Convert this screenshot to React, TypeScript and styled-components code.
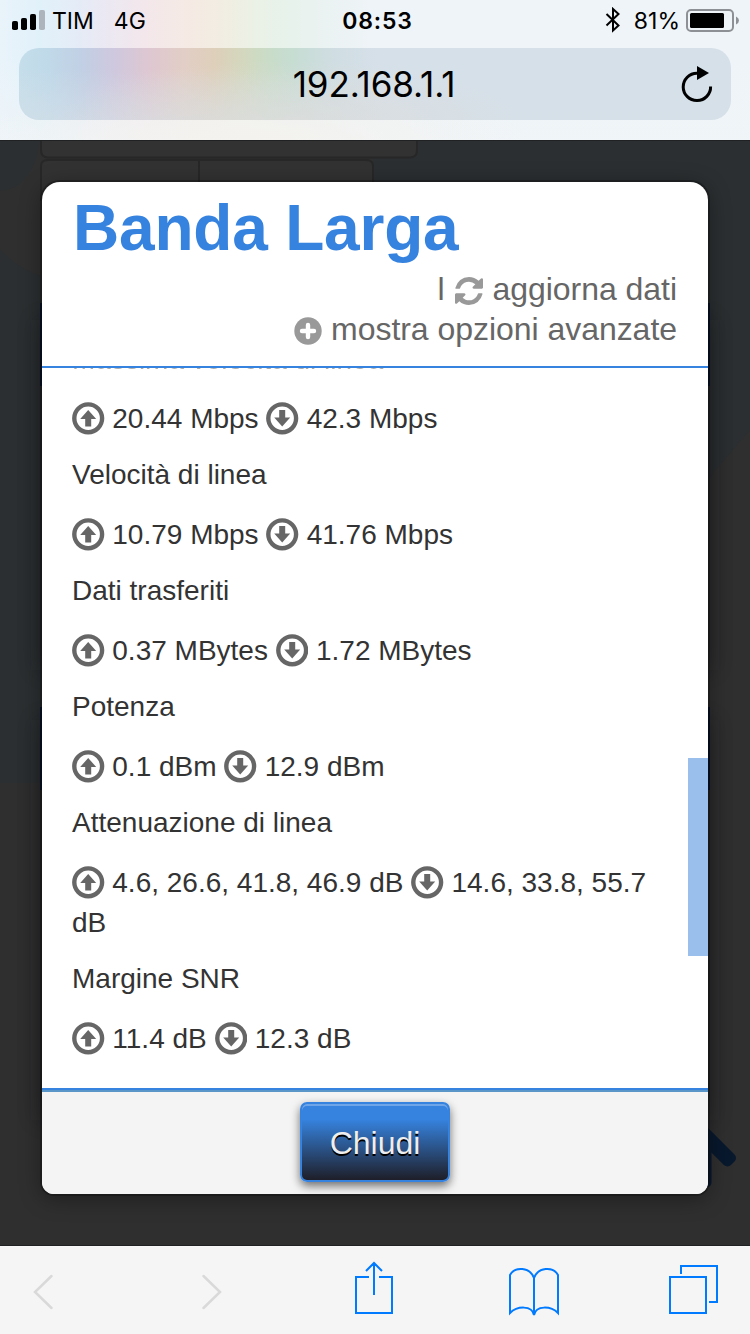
import React from 'react';
import styled, { createGlobalStyle } from 'styled-components';

const Global = createGlobalStyle`
  * { box-sizing: border-box; }
  body { margin: 0; background: #2f2f2f; }
  p, h1, h2 { margin: 0; }
`;

const Screen = styled.div`
  width: 750px;
  height: 1334px;
  display: flex;
  flex-direction: column;
  overflow: hidden;
  font-family: 'Liberation Sans', Arial, sans-serif;
`;

/* ---------- browser chrome, top ---------- */

const TopChrome = styled.header`
  height: 140px;
  flex: none;
  padding: 0 19px;
  display: flex;
  flex-direction: column;
  font-family: Inter, sans-serif;
  color: #000;
  background:
    radial-gradient(ellipse 280px 60px at 250px 140px, #f4f2ee 0, rgba(244, 242, 238, 0) 100%),
    linear-gradient(to bottom, rgba(240, 245, 248, 0) 40%, rgba(240, 245, 248, 0.75) 100%),
    linear-gradient(to right, #e9f3fa 0, #e1f1fa 40px, #e4ecf7 75px, #ece8f2 110px, #f3e7eb 145px, #f5eae4 185px, #f2ede2 220px, #ebf1e6 255px, #e7f2eb 285px, #ebf2f2 325px, #eef4f7 370px, #eff4f8 420px, #eff4f8 750px);
`;

const StatusBar = styled.div`
  height: 48px;
  flex: none;
  padding-bottom: 8px;
  margin: 0 -9px 0 -7px;
  display: grid;
  grid-template-columns: 1fr auto 1fr;
  align-items: center;
  font-size: 23px;
  line-height: 28px;
`;

const StatusGroup = styled.div<{ $end?: boolean }>`
  display: flex;
  align-items: center;
  justify-content: ${(p) => (p.$end ? 'flex-end' : 'flex-start')};
`;

const StatusText = styled.span<{ $left: number; $right?: number }>`
  margin: 1px ${(p) => p.$right ?? 0}px 0 ${(p) => p.$left}px;
`;

const Clock = styled.span`
  margin: 1px 0 0 3px;
  font-weight: 600;
  letter-spacing: 0.8px;
`;

const AddressBar = styled.div`
  position: relative;
  height: 72px;
  width: 712px;
  flex: none;
  border-radius: 20px;
  display: flex;
  align-items: center;
  justify-content: center;
  font-size: 35px;
  background:
    radial-gradient(ellipse 230px 60px at 270px 72px, rgba(222, 220, 217, 0.7) 0, rgba(222, 220, 217, 0) 100%),
    linear-gradient(to bottom, rgba(214, 224, 231, 0) 30%, rgba(214, 224, 231, 0.6) 100%),
    linear-gradient(to right, #c5deea 0, #c0d9e9 30px, #c2cfe4 65px, #cfc8de 95px, #dec7d1 130px, #e2cec6 165px, #decfba 195px, #d3d8be 225px, #c9dcc8 250px, #c6ddd3 275px, #cfdde1 310px, #d6e0e9 360px, #d6e0e9 712px);
`;

const Address = styled.span`
  margin-right: 2px;
  letter-spacing: -0.1px;
`;

const ReloadSlot = styled.span`
  position: absolute;
  right: 17px;
  top: 16px;
  display: flex;
`;

/* ---------- dimmed router page ---------- */

const Page = styled.main`
  position: relative;
  flex: 1;
  overflow: hidden;
  background: #2f2f2f;
  padding: 42px 42px 52px;
  display: flex;
`;

const Wallpaper = styled.svg`
  position: absolute;
  inset: 0;
`;

const Modal = styled.section`
  position: relative;
  flex: 1;
  display: flex;
  flex-direction: column;
  border-radius: 18px 18px 12px 12px;
  background: #fff;
  box-shadow: 0 0 0 2px rgba(12, 12, 12, 0.35), 0 4px 22px rgba(0, 0, 0, 0.4);
  overflow: hidden;
`;

const ModalHead = styled.div`
  height: 186px;
  flex: none;
  padding: 12px 31px 0 30px;
  border-bottom: 2px solid #3683df;
`;

const Title = styled.h1`
  padding-left: 1px;
  font-size: 64px;
  line-height: 68px;
  height: 75px;
  font-weight: bold;
  letter-spacing: -0.2px;
  color: #3683df;
`;

const HeadLink = styled.div`
  display: flex;
  justify-content: flex-end;
  align-items: center;
  height: 40px;
  font-size: 32px;
  line-height: 40px;
  color: #666;

  svg { margin: 3px 9px 0 0; }
`;

const Separator = styled.span`
  margin-right: 11px;
`;

const LinkText = styled.span`
  letter-spacing: -0.04px;
`;

const ScrollArea = styled.div`
  position: relative;
  flex: 1;
  overflow: hidden;
  padding: 0 40px 0 30px;
  font-size: 28px;
  line-height: 40px;
  color: #333;
`;

const Stats = styled.div`
  margin-top: -28px;
`;

const Label = styled.h2`
  font-size: inherit;
  font-weight: normal;
  margin-bottom: 20px;

  &:first-child {
    margin-bottom: 19px;
    opacity: 0.4;
  }
`;

const Value = styled.p`
  margin-bottom: 16px;

  svg { vertical-align: -7px; }
`;

const ScrollThumb = styled.div`
  position: absolute;
  right: 0;
  top: 390px;
  width: 20px;
  height: 198px;
  background: #9bbfec;
`;

const ModalFoot = styled.div`
  height: 106px;
  flex: none;
  padding-top: 10px;
  border-top: 2px solid #3683df;
  box-shadow: inset 0 2px 0 #5b96c8;
  background: #f4f4f4;
  display: flex;
  justify-content: center;
  align-items: flex-start;
`;

const CloseButton = styled.button`
  width: 150px;
  height: 80px;
  margin-top: 2px;
  padding: 2px 0 0;
  border: 2px solid #3683df;
  border-radius: 7px;
  font: 32px/74px 'Liberation Sans', Arial, sans-serif;
  color: #eee;
  text-shadow: 0 2px 0 #000;
  background: linear-gradient(to bottom, #3683df 0, #3683df 20%, #1e1e28 100%);
  box-shadow: inset 0 2px 0 rgba(255, 255, 255, 0.28), 0 4px 10px rgba(0, 0, 0, 0.55);
`;

/* ---------- browser chrome, bottom ---------- */

const BottomBar = styled.nav`
  height: 88px;
  flex: none;
  padding: 12px 31px 0 33px;
  border-top: 1px solid #f8f8f8;
  background: #f5f5f5;
  display: flex;
`;

const NavItem = styled.span<{ $before: number }>`
  display: flex;
  margin-left: ${(p) => p.$before}px;
`;

const ArrowIcon = ({ down }: { down?: boolean }) => (
  <svg width="32.5" height="33" viewBox="0 0 32.5 33">
    <circle cx="16.2" cy="16.3" r="13.900" fill="none" stroke="#666" strokeWidth="4.400" />
    <path
      d="M16.200 8 24.200 17H19.200V24.500H13.200V17H8.200z"
      fill="#666"
      transform={down ? 'rotate(180 16.2 16.3)' : undefined}
    />
  </svg>
);

interface Stat {
  label: string;
  up: string;
  down: string;
}

const stats: Stat[] = [
  { label: 'Massima velocità di linea', up: '20.44 Mbps', down: '42.3 Mbps' },
  { label: 'Velocità di linea', up: '10.79 Mbps', down: '41.76 Mbps' },
  { label: 'Dati trasferiti', up: '0.37 MBytes', down: '1.72 MBytes' },
  { label: 'Potenza', up: '0.1 dBm', down: '12.9 dBm' },
  { label: 'Attenuazione di linea', up: '4.6, 26.6, 41.8, 46.9 dB', down: '14.6, 33.8, 55.7 dB' },
  { label: 'Margine SNR', up: '11.4 dB', down: '12.3 dB' },
];

const Backdrop = () => (
  <Wallpaper width="750" height="1106" viewBox="0 0 750 1106">
    <defs>
      <filter id="soft" x="-20%" y="-20%" width="140%" height="140%">
        <feGaussianBlur stdDeviation="10" />
      </filter>
    </defs>
    <rect width="750" height="1106" fill="#2f2f2f" />
    <path d="M0 0H40Q34 48 0 51z" fill="#2b2f31" />
    <path d="M0 109Q20 130 42 136V643H0z" fill="#2b2f31" />
    <path d="M373 0H750V290L708 339H373z" fill="#2b2f31" />
    <rect x="38" y="180" width="674" height="350" fill="#14181a" opacity="0.35" filter="url(#soft)" />
    <rect x="38" y="580" width="674" height="400" fill="#14181a" opacity="0.35" filter="url(#soft)" />
    <path d="M41-10V10Q41 17.500 48 17.500H410Q417 17.500 417 10V-10z" fill="#323232" stroke="#272727" strokeWidth="2" />
    <path d="M41 60V26Q41 20 48 20H366Q373 20 373 26V60z" fill="#323232" stroke="#272727" strokeWidth="2" />
    <path d="M199 20V60" stroke="#272727" strokeWidth="2" />
    <path d="M40 163h670v83H40zM40 567h670v83H40z" fill="#031230" />
    <rect x="0" y="-7.500" width="60" height="15" rx="5" fill="#08182d" transform="translate(732.75 1023.25) rotate(225)" />
    <path d="M700 1000h11.500v42q0 5-5 5h-6.500z" fill="#08182d" />
    <path d="M0 .5H750M0 1105.500H750" stroke="#202122" />
  </Wallpaper>
);

export default function App() {
  return (
    <Screen>
      <Global />
      <TopChrome>
        <StatusBar>
          <StatusGroup>
            <svg width="34" height="22" viewBox="0 0 34 22">
              <rect x="0" y="12" width="6" height="9" rx="1.800" />
              <rect x="9" y="9" width="6" height="12" rx="1.800" />
              <rect x="18" y="5" width="6" height="16" rx="1.800" />
              <rect x="27" y="1" width="6" height="20" rx="1.800" fill="#adb4bc" />
            </svg>
            <StatusText $left={6}>TIM</StatusText>
            <StatusText $left={20}>4G</StatusText>
          </StatusGroup>
          <Clock>08:53</Clock>
          <StatusGroup $end>
            <svg width="16" height="26" viewBox="0 0 16 26" fill="none" stroke="#000" strokeWidth="2">
              <path d="M1.500 7 13.500 18.500 8 23.500V2l5.500 5L1.500 18.500" />
            </svg>
            <StatusText $left={13} $right={6}>81%</StatusText>
            <svg width="54" height="24" viewBox="0 0 54 24">
              <rect x="1" y="2" width="46" height="21" rx="4" fill="none" stroke="#8d9195" strokeWidth="2" />
              <rect x="4" y="5" width="34" height="15" rx="1.500" />
              <path d="M50 8.500q3 1.500 3 4t-3 4z" fill="#8d9195" />
            </svg>
          </StatusGroup>
        </StatusBar>
        <AddressBar>
          <Address>192.168.1.1</Address>
          <ReloadSlot>
            <svg width="34" height="40" viewBox="0 0 34 40">
              <path d="M30.600 22.500A13.700 13.700 0 1 1 17 9.200" fill="none" stroke="#000" strokeWidth="3" />
              <path d="M17 2 29 9 17 16z" />
            </svg>
          </ReloadSlot>
        </AddressBar>
      </TopChrome>

      <Page>
        <Backdrop />
        <Modal>
          <ModalHead>
            <Title>Banda Larga</Title>
            <HeadLink>
              <Separator>l</Separator>
              <svg width="28" height="28" viewBox="0 0 1536 1536" fill="#999">
                <path d="M1511 928q0 5-1 7-64 268-268 434.500T764 1536q-146 0-282.500-55T238 1324l-129 129q-19 19-45 19t-45-19-19-45V960q0-26 19-45t45-19h448q26 0 45 19t19 45-19 45l-137 137q71 66 161 102t187 36q134 0 250-65t186-179q11-17 53-117 8-23 30-23h192q13 0 22.500 9.500t9.500 22.500zm25-800v448q0 26-19 45t-45 19h-448q-26 0-45-19t-19-45 19-45l138-138Q969 256 768 256q-134 0-250 65T332 500q-11 17-53 117-8 23-30 23H50q-13 0-22.500-9.500T18 608v-7q65-268 270-434.500T768 0q146 0 284 55.500T1297 212l130-129q19-19 45-19t45 19 19 45z" />
              </svg>
              <LinkText>aggiorna dati</LinkText>
            </HeadLink>
            <HeadLink>
              <svg width="28" height="28" viewBox="0 0 28 28">
                <circle cx="14" cy="14" r="13.700" fill="#999" />
                <path d="M14 8v12M8 14h12" stroke="#fff" strokeWidth="4.400" strokeLinecap="round" />
              </svg>
              <LinkText>mostra opzioni avanzate</LinkText>
            </HeadLink>
          </ModalHead>
          <ScrollArea>
            <Stats>
              {stats.map((s) => (
                <React.Fragment key={s.label}>
                  <Label>{s.label}</Label>
                  <Value>
                    <ArrowIcon /> {s.up} <ArrowIcon down /> {s.down}
                  </Value>
                </React.Fragment>
              ))}
            </Stats>
            <ScrollThumb />
          </ScrollArea>
          <ModalFoot>
            <CloseButton>Chiudi</CloseButton>
          </ModalFoot>
        </Modal>
      </Page>

      <BottomBar>
        <NavItem $before={0}>
          <svg width="20" height="68" viewBox="0 0 20 68" fill="none" stroke="#d9d9d9" strokeWidth="2.500" strokeLinecap="round">
            <path d="M18.500 17 2 33 18.500 49" />
          </svg>
        </NavItem>
        <NavItem $before={149}>
          <svg width="20" height="68" viewBox="0 0 20 68" fill="none" stroke="#d9d9d9" strokeWidth="2.500" strokeLinecap="round">
            <path d="M1.500 17 18 33 1.500 49" />
          </svg>
        </NavItem>
        <NavItem $before={133}>
          <svg width="38" height="68" viewBox="0 0 38 68" fill="none" stroke="#007aff" strokeWidth="2">
            <path d="M14 18H1V54H37V18H24M19 36V4M11 12 19 4 27 12" />
          </svg>
        </NavItem>
        <NavItem $before={116}>
          <svg width="50" height="68" viewBox="0 0 50 68" fill="none" stroke="#007aff" strokeWidth="2">
            <path d="M25 56V19C21 8 6 7 1 16V54C8 47 23 46 25 56ZM25 19C29 8 44 7 49 16V54C42 47 27 46 25 56" />
          </svg>
        </NavItem>
        <NavItem $before={110}>
          <svg width="50" height="68" viewBox="0 0 50 68" fill="none" stroke="#007aff" strokeWidth="2">
            <path d="M1 18H37V54H1zM12 15V7H48V43H40" />
          </svg>
        </NavItem>
      </BottomBar>
    </Screen>
  );
}
